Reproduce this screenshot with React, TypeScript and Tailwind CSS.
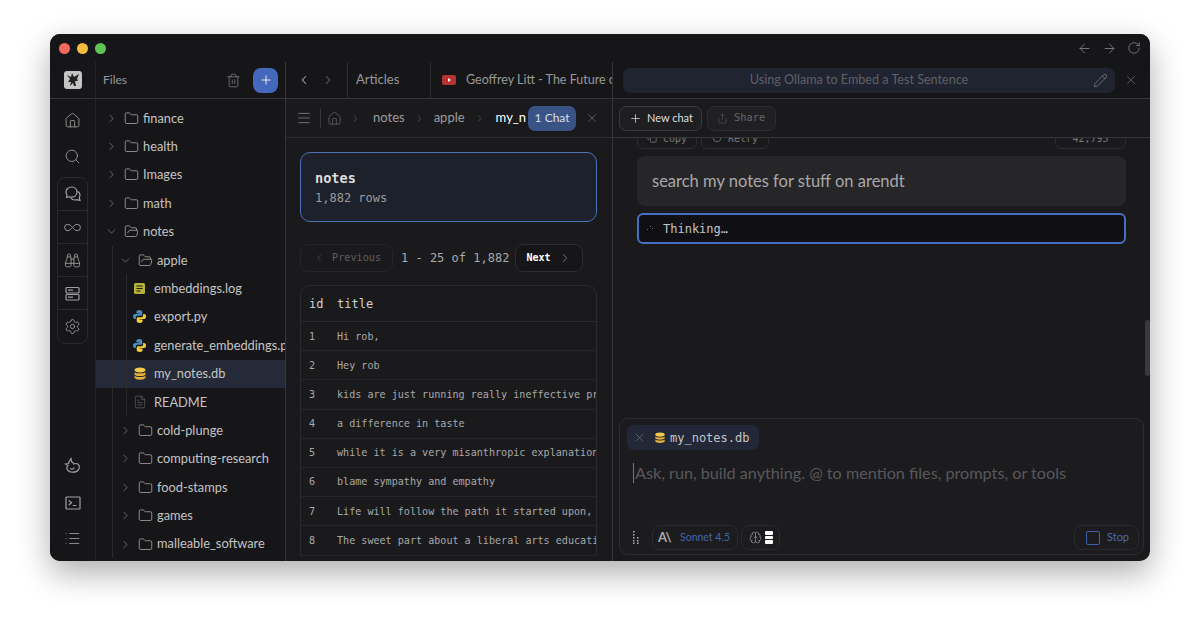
import React from 'react';
import {
  ArrowLeft,
  ArrowRight,
  Binoculars,
  ChevronDown,
  ChevronLeft,
  ChevronRight,
  Copy,
  FileText,
  Folder,
  FolderOpen,
  House,
  Infinity as InfinityIcon,
  List,
  Menu,
  Pencil,
  Plus,
  RotateCw,
  Search,
  Settings,
  Share,
  Trash2,
  X,
  Brain,
} from 'lucide-react';

const uiFont = "font-['Lato','Noto_Sans',sans-serif]";
const monoFont = "font-['DejaVu_Sans_Mono','Liberation_Mono',monospace]";

const DbIcon = ({ size = 14 }: { size?: number }) => (
  <svg width={size} height={size} viewBox="0 0 14 14" className="shrink-0">
    <ellipse cx="7" cy="3" rx="5.5" ry="2.4" fill="#f2c94c" />
    <path d="M1.5 5.2c1 1.6 10 1.6 11 0V7.4c-1 2-10 2-11 0z" fill="#e8b23a" />
    <path d="M1.5 8.8c1 1.6 10 1.6 11 0v2c-1 2.6-10 2.6-11 0z" fill="#e8b23a" />
  </svg>
);

const PyIcon = () => (
  <svg width="15" height="15" viewBox="0 0 15 15" className="shrink-0">
    <path d="M7.4 1C5 1 4.4 2 4.4 3v1.500h3.200V5H2.900C1.600 5 1 6.200 1 7.500S1.700 10 2.900 10h1V8.500c0-1 .8-1.800 1.800-1.800h3.100c.9 0 1.500-.7 1.500-1.500V3C10.300 1.800 9 1 7.400 1z" fill="#4b8bbe" />
    <path d="M7.600 14c2.400 0 3-1 3-2v-1.500H7.400V10h4.700c1.300 0 1.900-1.200 1.900-2.500S13.300 5 12.100 5h-1v1.500c0 1-.8 1.800-1.800 1.800H6.200c-.9 0-1.500.7-1.500 1.500V12c0 1.200 1.300 2 2.900 2z" fill="#f4ca3e" />
  </svg>
);

const LogIcon = () => (
  <svg width="13" height="13" viewBox="0 0 13 13" className="shrink-0">
    <rect x="1" y="1" width="11" height="11" rx="1.5" fill="#b5b13a" />
    <path d="M3.500 4h6M3.500 6.500h6M3.500 9h4" stroke="#1d1d16" strokeWidth="1.100" />
  </svg>
);

const ChatsIcon = () => (
  <svg width="18" height="18" viewBox="0 0 18 18" fill="none" stroke="currentColor" strokeWidth="1.200">
    <path d="M7.500 2C4.400 2 2 4.200 2 7c0 1.100.4 2.100 1 2.900L2.500 12.500l2.600-.8c.7.300 1.500.5 2.400.5 3.100 0 5.500-2.200 5.500-5.100S10.600 2 7.500 2z" />
    <path d="M13.600 6.200c1.500.8 2.400 2.200 2.400 3.900 0 .9-.3 1.700-.7 2.400l.7 3-3-.9c-.7.300-1.400.4-2.100.4-1.800 0-3.300-.8-4.200-2" />
  </svg>
);

const StackIcon = () => (
  <svg width="17" height="17" viewBox="0 0 17 17" fill="none" stroke="currentColor" strokeWidth="1.200">
    <rect x="2" y="2.500" width="13" height="5.500" rx="1" />
    <rect x="2" y="9.500" width="13" height="5.500" rx="1" />
    <path d="M4 5.200h5M4 12.200h5" />
  </svg>
);

const DuckIcon = () => (
  <svg width="18" height="18" viewBox="0 0 18 18" fill="none" stroke="currentColor" strokeWidth="1.200">
    <path d="M7 1.500l.6 3.200c1 .5 1.800 1.300 2.200 2.300 1.100-.5 2.900-.7 4 .1 1.700 1.200 2 3.600.8 5.200-1.100 1.700-3.400 3-5.800 2.900-2.500 0-5-1.300-5.700-3.200-.5-1.300-.1-2.700.9-3.400L1.500 7l2.900-.5C5 4.800 5.800 3 7 1.500z" />
    <path d="M6 11.500c1.500.9 3.500.6 4.500-.8" />
  </svg>
);

const TerminalIcon = () => (
  <svg width="16" height="14" viewBox="0 0 16 14" fill="none" stroke="currentColor" strokeWidth="1.200">
    <rect x="1" y="1" width="14" height="12" rx="0.500" />
    <path d="M3.800 4.500L6.500 6.800 3.800 9M7.800 9.500h3.500" />
  </svg>
);

const GripDots = () => (
  <svg width="7" height="13" viewBox="0 0 7 13" fill="#b0b0b2" className="shrink-0">
    <rect x="0" y="0" width="1.500" height="1.500" />
    <rect x="0" y="3" width="1.500" height="1.500" />
    <rect x="0" y="6" width="1.500" height="1.500" />
    <rect x="0" y="9" width="1.500" height="1.500" />
    <rect x="0" y="11.500" width="1.500" height="1.500" />
    <rect x="4" y="6" width="1.500" height="1.500" />
    <rect x="4" y="9" width="1.500" height="1.500" />
    <rect x="4" y="11.500" width="1.500" height="1.500" />
  </svg>
);

const Row = ({
  depth,
  label,
  kind,
  active,
}: {
  depth: number;
  label: string;
  kind: 'closed' | 'open' | 'log' | 'py' | 'db' | 'doc';
  active?: boolean;
}) => {
  const isFolder = kind === 'closed' || kind === 'open';
  const pad = depth === 0 ? 'pl-[9px]' : depth === 1 ? 'pl-[23px]' : 'pl-[36px]';
  return (
    <div className={`relative h-[28.4px] flex items-center shrink-0 whitespace-nowrap overflow-hidden ${pad} ${active ? 'bg-[#252a38]' : ''}`}>
      {depth >= 1 && <span className="absolute left-[16px] top-0 bottom-0 w-px bg-[#2a2a2d]" />}
      {depth === 2 && <span className="absolute left-[30px] top-0 bottom-0 w-px bg-[#2a2a2d]" />}
      {isFolder ? (
        <span className="w-[19px] shrink-0 text-[#77777a]">
          {kind === 'open' ? <ChevronDown size={13} strokeWidth={1.5} /> : <ChevronRight size={13} strokeWidth={1.5} />}
        </span>
      ) : null}
      <span className={`shrink-0 flex justify-center w-[15px] ${isFolder ? 'text-[#b0b0b2]' : 'text-[#6b6b6e]'}`}>
        {kind === 'closed' && <Folder size={15} strokeWidth={1.2} />}
        {kind === 'open' && <FolderOpen size={15} strokeWidth={1.2} />}
        {kind === 'log' && <LogIcon />}
        {kind === 'py' && <PyIcon />}
        {kind === 'db' && <DbIcon />}
        {kind === 'doc' && <FileText size={14} strokeWidth={1.1} />}
      </span>
      <span className={`text-[12.8px] text-[#c4c4c5] ${isFolder ? 'ml-[4px]' : 'ml-[7px]'}`}>{label}</span>
    </div>
  );
};

const rows = [
  'Hi rob,',
  'Hey rob',
  'kids are just running really ineffective programs',
  'a difference in taste',
  'while it is a very misanthropic explanation of it',
  'blame sympathy and empathy',
  'Life will follow the path it started upon, and so',
  'The sweet part about a liberal arts education is',
];

const App = () => (
  <div className={`w-[1200px] h-[627px] bg-white px-[50px] pt-[34px] overflow-hidden ${uiFont}`}>
    <div className="w-[1100px] h-[527px] rounded-[10px] bg-[#1a1a1c] flex flex-col overflow-hidden shadow-[0_12px_32px_rgba(0,0,0,0.32)]">
      {/* Title bar */}
      <div className="h-[28px] shrink-0 bg-[#161618] flex items-center pl-[9px] pr-[9px]">
        <div className="flex gap-[7px]">
          <span className="w-[11px] h-[11px] rounded-full bg-[#f3685e]" />
          <span className="w-[11px] h-[11px] rounded-full bg-[#f4bb3f]" />
          <span className="w-[11px] h-[11px] rounded-full bg-[#5fc454]" />
        </div>
        <div className="ml-auto flex items-center gap-[10px] text-[#8a8a8c]">
          <ArrowLeft size={15} strokeWidth={1.3} />
          <ArrowRight size={15} strokeWidth={1.3} />
          <RotateCw size={14} strokeWidth={1.3} />
        </div>
      </div>

      <div className="flex-1 flex min-h-0">
        {/* Rail */}
        <div className="w-[46px] shrink-0 bg-[#161618] flex flex-col items-center border-r border-[#242426]">
          <div className="h-[37px] w-full shrink-0 flex items-center justify-center border-b border-[#36363a]">
            <div className="w-[18px] h-[18px] rounded-[3px] bg-[#c4c4c4] flex items-center justify-center">
              <svg width="16" height="16" viewBox="0 0 16 16">
                <path d="M2 3l4 2 1-4 2 4 5-3-2 5 1 2-3 0 1 5H9L8 11l-3 3 1-4-3 0 2-3z" fill="#222" />
              </svg>
            </div>
          </div>
          <div className="mt-[13px] flex flex-col items-center text-[#a0a0a2]">
            <House size={17} strokeWidth={1.2} />
            <Search size={17} strokeWidth={1.2} className="mt-[19px]" />
          </div>
          <div className="mt-[12px] w-[31px] rounded-[8px] border border-[#2a2a2d] flex flex-col items-center text-[#a0a0a2]">
            <div className="h-[33px] w-full flex items-center justify-center border-b border-[#2a2a2d]"><ChatsIcon /></div>
            <div className="h-[33px] w-full flex items-center justify-center border-b border-[#2a2a2d]"><InfinityIcon size={19} strokeWidth={1.2} /></div>
            <div className="h-[33px] w-full flex items-center justify-center border-b border-[#2a2a2d]"><Binoculars size={17} strokeWidth={1.2} /></div>
            <div className="h-[33px] w-full flex items-center justify-center border-b border-[#2a2a2d]"><StackIcon /></div>
            <div className="h-[33px] w-full flex items-center justify-center"><Settings size={17} strokeWidth={1.2} /></div>
          </div>
          <div className="mt-auto mb-[14px] flex flex-col items-center text-[#a0a0a2]">
            <DuckIcon />
            <span className="mt-[21px]"><TerminalIcon /></span>
            <List size={17} strokeWidth={1.2} className="mt-[20px]" />
          </div>
        </div>

        {/* Files panel */}
        <div className="w-[190px] shrink-0 bg-[#161618] flex flex-col border-r border-[#36363a]">
          <div className="h-[37px] shrink-0 flex items-center pl-[7px] pr-[7px] border-b border-[#36363a]">
            <span className="text-[12px] text-[#98989a]">Files</span>
            <Trash2 size={15} strokeWidth={1.1} className="ml-auto text-[#8e8e90]" />
            <div className="ml-[12px] w-[25px] h-[25px] rounded-[8px] bg-[#4468bc] flex items-center justify-center text-white">
              <Plus size={14} strokeWidth={1.5} />
            </div>
          </div>
          <div className="flex-1 min-h-0 overflow-hidden pt-[5px]">
            <Row depth={0} label="finance" kind="closed" />
            <Row depth={0} label="health" kind="closed" />
            <Row depth={0} label="Images" kind="closed" />
            <Row depth={0} label="math" kind="closed" />
            <Row depth={0} label="notes" kind="open" />
            <Row depth={1} label="apple" kind="open" />
            <Row depth={2} label="embeddings.log" kind="log" />
            <Row depth={2} label="export.py" kind="py" />
            <Row depth={2} label="generate_embeddings.py" kind="py" />
            <Row depth={2} label="my_notes.db" kind="db" active />
            <Row depth={2} label="README" kind="doc" />
            <Row depth={1} label="cold-plunge" kind="closed" />
            <Row depth={1} label="computing-research" kind="closed" />
            <Row depth={1} label="food-stamps" kind="closed" />
            <Row depth={1} label="games" kind="closed" />
            <Row depth={1} label="malleable_software" kind="closed" />
          </div>
        </div>

        {/* Middle column */}
        <div className="w-[327px] shrink-0 flex flex-col border-r border-[#36363a] overflow-hidden">
          <div className="h-[37px] shrink-0 bg-[#161618] flex items-center border-b border-[#36363a] whitespace-nowrap overflow-hidden">
            <ChevronLeft size={14} strokeWidth={1.8} className="ml-[11px] text-[#b0b0b2] shrink-0" />
            <ChevronRight size={14} strokeWidth={1.8} className="ml-[10px] text-[#66666a] shrink-0" />
            <div className="ml-[12px] h-[36px] pl-[8px] w-[84px] flex items-center border-x border-[#2d2d30] shrink-0 text-[13px] text-[#98989a]">Articles</div>
            <div className="ml-[11px] w-[14px] h-[10px] rounded-[2px] bg-[#b83232] flex items-center justify-center shrink-0">
              <span className="w-0 h-0 border-y-[2px] border-y-transparent border-l-[3px] border-l-white" />
            </div>
            <span className="ml-[10px] text-[12.5px] text-[#98989a]">Geoffrey Litt - The Future of</span>
          </div>
          <div className="h-[39px] shrink-0 flex items-center border-b border-[#2d2d30] whitespace-nowrap overflow-hidden">
            <Menu size={16} strokeWidth={1.1} className="ml-[10px] text-[#8a8a8c] shrink-0" />
            <span className="ml-[8px] w-px h-[20px] bg-[#36363a] shrink-0" />
            <House size={15} strokeWidth={1} className="ml-[6px] text-[#77777a] shrink-0" />
            <ChevronRight size={11} strokeWidth={1.2} className="ml-[8px] text-[#6e6e70] shrink-0" />
            <span className="ml-[12px] text-[13px] text-[#9a9a9c] shrink-0">notes</span>
            <ChevronRight size={11} strokeWidth={1.2} className="ml-[9px] text-[#6e6e70] shrink-0" />
            <span className="ml-[9px] text-[13px] text-[#9a9a9c] shrink-0">apple</span>
            <ChevronRight size={11} strokeWidth={1.2} className="ml-[9px] text-[#6e6e70] shrink-0" />
            <span className="ml-[11px] text-[13px] text-white shrink-0">my_n</span>
            <span className="ml-[2px] w-[48px] h-[25px] rounded-[7px] bg-[#3a5387] text-[#d8dfee] text-[12px] flex items-center justify-center shrink-0">1 Chat</span>
            <X size={14} strokeWidth={1.1} className="ml-[9px] text-[#77777a] shrink-0" />
          </div>
          <div className="flex-1 min-h-0 overflow-hidden pl-[14px] pr-[15px] pt-[14px]">
            <div className={`h-[70px] rounded-[10px] border border-[#4c71b6] bg-[#1d212b] pl-[14px] pt-[15px] ${monoFont}`}>
              <div className="text-[13.6px] leading-[20px] font-bold text-[#dcdcdd]">notes</div>
              <div className="text-[12px] leading-[20px] text-[#9a9a9c]">1,882 rows</div>
            </div>
            <div className={`mt-[21px] flex items-center h-[29px] ${monoFont}`}>
              <div className="w-[93px] h-[28px] rounded-[8px] border border-[#262628] flex items-center text-[#5e5e61] text-[10.2px]">
                <ChevronLeft size={12} strokeWidth={1.2} className="ml-[12px]" />
                <span className="ml-[7px]">Previous</span>
              </div>
              <span className="ml-[8px] text-[12px] text-[#a8a8aa] whitespace-nowrap">1 - 25 of 1,882</span>
              <div className="ml-[6px] w-[68px] h-[28px] rounded-[8px] border border-[#2d2d30] bg-[#161618] flex items-center text-white text-[10px] font-bold">
                <span className="ml-[10px]">Next</span>
                <ChevronRight size={14} strokeWidth={1.2} className="ml-[8px] text-[#9a9a9c]" />
              </div>
            </div>
            <div className={`mt-[13px] rounded-t-[10px] border border-[#2a2a2d] border-b-0 overflow-hidden ${monoFont}`}>
              <div className="h-[36px] flex items-center border-b border-[#2a2a2d] text-[12px] text-[#d0d0d1]">
                <span className="w-[36px] pl-[8px] shrink-0">id</span>
                <span>title</span>
              </div>
              {rows.map((title, i) => (
                <div key={i} className="h-[29.2px] flex items-center border-b border-[#262628] text-[10.1px] text-[#a8a8aa] whitespace-nowrap overflow-hidden">
                  <span className="w-[36px] pl-[8px] shrink-0">{i + 1}</span>
                  <span>{title}</span>
                </div>
              ))}
            </div>
          </div>
        </div>

        {/* Chat column */}
        <div className="flex-1 min-w-0 flex flex-col relative">
          <div className="h-[37px] shrink-0 bg-[#161618] flex items-center border-b border-[#36363a]">
            <div className="ml-[10px] w-[492px] h-[25px] pr-[20px] rounded-[7px] bg-[#1f2430] relative flex items-center justify-center text-[12.6px] text-[#5f6066]">
              Using Ollama to Embed a Test Sentence
              <Pencil size={15} strokeWidth={1.1} className="absolute right-[7px] top-[5px] text-[#8a8a8c]" />
            </div>
            <X size={14} strokeWidth={1.1} className="ml-[9px] text-[#77777a]" />
          </div>
          <div className="h-[39px] shrink-0 bg-[#1a1a1c] flex items-center border-b border-[#36363a] pl-[6px] z-10">
            <div className="w-[83px] h-[25px] rounded-[7px] border border-[#39393c] bg-[#1f1f21] flex items-center text-[11px] text-[#dedee0]">
              <Plus size={13} strokeWidth={1.4} className="ml-[9px]" />
              <span className="ml-[5px]">New chat</span>
            </div>
            <div className={`ml-[5px] w-[69px] h-[25px] rounded-[7px] border border-[#2d2d30] bg-[#202022] flex items-center text-[10.4px] text-[#66666a] ${monoFont}`}>
              <Share size={11} strokeWidth={1.1} className="ml-[9px]" />
              <span className="ml-[6px]">Share</span>
            </div>
          </div>
          <div className="flex-1 min-h-0 overflow-hidden px-[24px] flex flex-col">
            <div className={`h-[11px] shrink-0 overflow-hidden relative text-[10px] text-[#77777a] ${monoFont}`}>
              <div className="absolute -top-[11px] left-0 right-0 flex">
                <span className="w-[60px] h-[22px] rounded-b-[6px] border border-[#2d2d30] flex items-center justify-center gap-[6px]"><Copy size={10} />Copy</span>
                <span className="ml-[4px] w-[68px] h-[22px] rounded-b-[6px] border border-[#2d2d30] flex items-center justify-center gap-[6px]"><RotateCw size={10} />Retry</span>
                <span className="ml-auto w-[71px] h-[22px] rounded-b-[6px] border border-[#2d2d30] flex items-center justify-center">42,795</span>
              </div>
            </div>
            <div className="mt-[7px] h-[50px] shrink-0 rounded-[8px] bg-[#262628] flex items-center pl-[15px] text-[16.5px] text-[#a8a8aa]">
              search my notes for stuff on arendt
            </div>
            <div className={`mt-[7px] h-[31px] shrink-0 rounded-[6px] border-2 border-[#466fc0] bg-[#101014] flex items-center text-[12px] text-[#c4c4c5] ${monoFont}`}>
              <svg width="7" height="6" viewBox="0 0 7 6" fill="#6a6a80" className="ml-[8px] shrink-0">
                <rect x="0" y="3" width="1" height="1" />
                <rect x="3" y="0" width="1" height="1" />
                <rect x="5" y="2" width="1" height="1" />
              </svg>
              <span className="ml-[9px]">Thinking…</span>
            </div>
          </div>
          {/* Scrollbar */}
          <div className="absolute right-0 top-[258px] w-[5px] h-[56px] rounded-full bg-[#3a3a3c]" />
          {/* Composer */}
          <div className="h-[137px] shrink-0 mx-[6px] mb-[6px] w-[525px] rounded-[9px] border border-[#2d2d30] bg-[#1c1c1f] flex flex-col pl-[7px] pr-[4px]">
            <div className={`mt-[6px] w-[132px] h-[25px] rounded-[7px] bg-[#232838] flex items-center text-[12px] text-[#c4c4c5] ${monoFont}`}>
              <X size={13} strokeWidth={1.2} className="ml-[6px] text-[#77777a]" />
              <span className="ml-[8px]"><DbIcon size={12} /></span>
              <span className="ml-[4px]">my_notes.db</span>
            </div>
            <div className="mt-[12px] ml-[6px] flex items-center h-[22px] text-[16.2px] text-[#58585c] whitespace-nowrap">
              <span className="w-px h-[20px] bg-[#77777a] mr-px" />
              Ask, run, build anything. @ to mention files, prompts, or tools
            </div>
            <div className="mt-auto mb-[4px] flex items-center">
              <span className="ml-[6px]"><GripDots /></span>
              <div className="ml-[12px] w-[86px] h-[25px] rounded-[8px] border border-[#2a2a2d] flex items-center">
                <span className="ml-[5px] text-[13px] font-bold tracking-tighter text-[#a8a8aa]">A\</span>
                <span className="ml-[9px] text-[10.5px] text-[#4464a8]">Sonnet 4.5</span>
              </div>
              <div className="ml-[3px] w-[39px] h-[25px] rounded-[8px] border border-[#2a2a2d] flex items-center text-[#a8a8aa]">
                <Brain size={13} strokeWidth={1.1} className="ml-[7px]" />
                <span className="ml-[3px] flex flex-col gap-[1px]">
                  <span className="w-[8px] h-[3.500px] rounded-[1px] bg-white" />
                  <span className="w-[8px] h-[3.500px] rounded-[1px] bg-white" />
                  <span className="w-[8px] h-[3.500px] rounded-[1px] bg-white" />
                </span>
              </div>
              <div className="ml-auto w-[65px] h-[25px] rounded-[8px] border border-[#2a2a2d] flex items-center text-[11px] text-[#4a6bb4]">
                <span className="ml-[11px] w-[14px] h-[14px] rounded-[2px] border-[1.5px] border-[#3f5fa8]" />
                <span className="ml-[7px]">Stop</span>
              </div>
            </div>
          </div>
        </div>
      </div>
    </div>
  </div>
);

export default App;
